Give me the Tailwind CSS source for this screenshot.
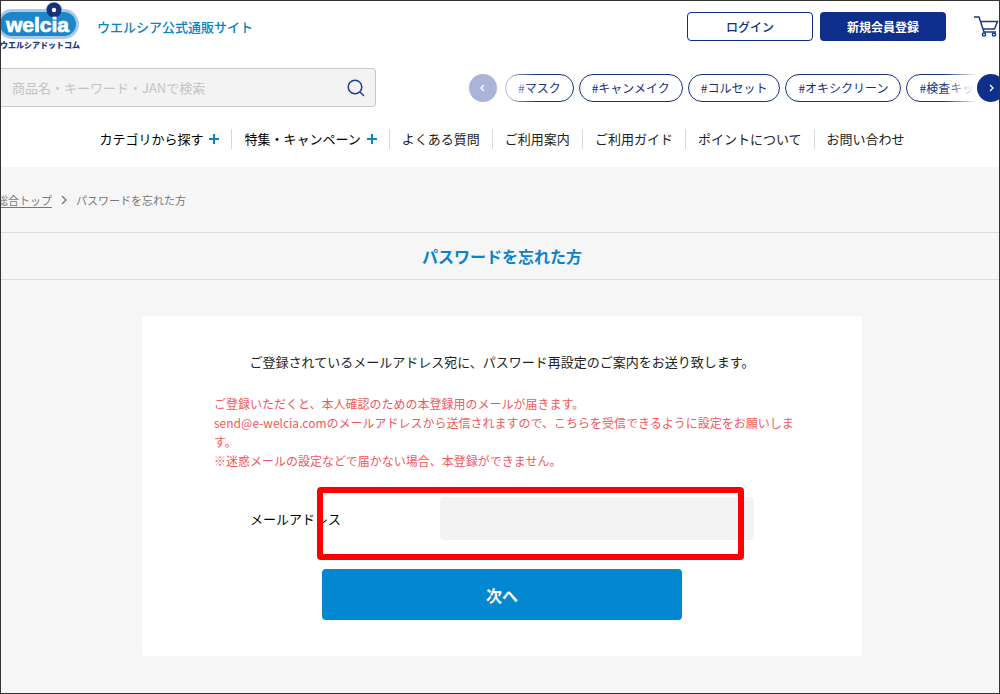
<!DOCTYPE html>
<html lang="ja">
  <head>
    <meta charset="UTF-8" />
    <meta name="viewport" content="width=device-width, initial-scale=1.0" />
    <title>パスワードを忘れた方 | ウエルシアドットコム</title>
    <script src="https://cdn.jsdelivr.net/npm/@tailwindcss/browser@4"></script>
  </head>

<body class="min-h-screen flex flex-col overflow-x-hidden border border-[#333] bg-[#f6f6f6] font-['Noto_Sans_CJK_JP',sans-serif] text-[13px] leading-5 text-[#222]">

  <header class="bg-white pb-[18px]">
    <!-- logo and account -->
    <div class="flex items-center h-[51px]">
      <a href="#" class="shrink-0" aria-label="welcia">
        <svg class="w-20 h-[51px]" viewBox="0 0 80 51">
          <rect x="-4" y="8" width="82" height="30" rx="15" fill="#a9c9e8" />
          <circle cx="53" cy="10" r="9" fill="#a9c9e8" />
          <rect x="-1" y="11" width="76" height="24" rx="12" fill="#1c86c8" />
          <circle cx="53" cy="9" r="7.5" fill="#15317e" />
          <circle cx="53" cy="9" r="2.2" fill="#fff" />
          <text x="5" y="31" font-family="Liberation Sans, sans-serif" font-size="21" font-weight="700" fill="#fff" stroke="#fff" stroke-width="0.7">welcia</text>
          <text x="-1" y="47" font-family="Noto Sans CJK JP, sans-serif" font-size="8" font-weight="900" fill="#1c3a88">ウエルシアドットコム</text>
        </svg>
      </a>
      <p class="ml-4 text-[#0a82c6] font-medium">ウエルシア公式通販サイト</p>
      <div class="ml-auto flex items-center gap-[7px] text-xs">
        <button class="w-[126px] h-[29px] rounded-sm border border-[#0f2f8c] bg-white font-medium text-[#0f2f8c]">ログイン</button>
        <button class="w-[126px] h-[29px] rounded-sm bg-[#0f2f8c] font-bold text-white">新規会員登録</button>
      </div>
      <a href="#" class="ml-7 w-[25px] shrink-0" aria-label="カート">
        <svg class="w-[25px] h-6" viewBox="0 0 25 24" fill="none" stroke="#1c3a8c" stroke-width="1.5">
          <path d="M0 2h5l5 15h12M6.500 6.500h17l-3 7.500H9" />
          <circle cx="10" cy="19.500" r="1.600" />
          <circle cx="20" cy="19.500" r="1.600" />
        </svg>
      </a>
    </div>

    <!-- search and keywords -->
    <div class="mt-4 flex items-center">
      <form class="flex items-center w-[375px] h-[39px] shrink-0 rounded-r-sm border border-l-0 border-[#c8c8c8] bg-[#f3f3f3]">
        <input type="text" aria-label="商品検索" placeholder="商品名・キーワード・JANで検索" class="flex-1 h-full pl-[11px] outline-none placeholder:text-[#c4c4c4]" />
        <button class="mr-[9px]" aria-label="検索">
          <svg class="w-5 h-5" viewBox="0 0 20 20" fill="none" stroke="#1f3a93" stroke-width="1.5">
            <circle cx="9" cy="9" r="6.8" />
            <path d="M14 14l4 4" />
          </svg>
        </button>
      </form>
      <div class="relative flex-1 min-w-0 ml-[93px] flex items-center">
        <button class="shrink-0 flex items-center justify-center w-7 h-7 rounded-full bg-[#a9b4d8]" aria-label="前へ">
          <svg class="w-3 h-3" viewBox="0 0 12 12" fill="none" stroke="#fff" stroke-width="1.3"><path d="M7 3L4 6l3 3" /></svg>
        </button>
        <div class="relative ml-2 flex-1 min-w-0 overflow-hidden">
          <div class="flex gap-[5px] text-xs text-[#16307f] whitespace-nowrap">
            <a href="#" class="px-3 leading-[26px] rounded-full border border-[#16307f]">#マスク</a>
            <a href="#" class="px-3 leading-[26px] rounded-full border border-[#16307f]">#キャンメイク</a>
            <a href="#" class="px-3 leading-[26px] rounded-full border border-[#16307f]">#コルセット</a>
            <a href="#" class="px-3 leading-[26px] rounded-full border border-[#16307f]">#オキシクリーン</a>
            <a href="#" class="px-3 leading-[26px] rounded-full border border-[#16307f]">#検査キット</a>
          </div>
          <div class="absolute inset-y-0 left-0 w-8 bg-linear-to-r from-white/70 to-white/0"></div>
          <div class="absolute inset-y-0 right-0 w-14 bg-linear-to-r from-white/0 to-white to-60%"></div>
        </div>
        <button class="absolute -right-1.5 flex items-center justify-center w-7 h-7 rounded-full bg-[#0f2f8c]" aria-label="次へ">
          <svg class="w-3 h-3" viewBox="0 0 12 12" fill="none" stroke="#fff" stroke-width="1.3"><path d="M5 3l3 3-3 3" /></svg>
        </button>
      </div>
    </div>

    <nav class="mt-[22px] pl-1">
      <ul class="flex justify-center divide-x divide-[#d8d8d8] whitespace-nowrap">
        <li class="px-3">
          <a href="#" class="flex items-center gap-[6px] text-black">カテゴリから探す
            <svg class="w-[10px] h-[10px]" viewBox="0 0 10 10" stroke="#0a82c6" stroke-width="2"><path d="M5 0v10M0 5h10" /></svg>
          </a>
        </li>
        <li class="px-3">
          <a href="#" class="flex items-center gap-[6px] text-black">特集・キャンペーン
            <svg class="w-[10px] h-[10px]" viewBox="0 0 10 10" stroke="#0a82c6" stroke-width="2"><path d="M5 0v10M0 5h10" /></svg>
          </a>
        </li>
        <li class="px-3"><a href="#">よくある質問</a></li>
        <li class="px-3"><a href="#">ご利用案内</a></li>
        <li class="px-3"><a href="#">ご利用ガイド</a></li>
        <li class="px-3"><a href="#">ポイントについて</a></li>
        <li class="px-3"><a href="#">お問い合わせ</a></li>
      </ul>
    </nav>
  </header>

  <main class="pb-9">
    <div class="flex items-center h-[65px] text-[11px] text-[#777]">
      <a href="#" class="-ml-1 underline underline-offset-2">総合トップ</a>
      <svg class="mx-[6px] w-3 h-3" viewBox="0 0 12 12" fill="none" stroke="#777" stroke-width="1.3"><path d="M4 2l4 4-4 4" /></svg>
      <span>パスワードを忘れた方</span>
    </div>

    <h1 class="pl-1 h-12 border-y border-[#dcdcdc] text-center text-base leading-[46px] font-bold text-[#0a82cc]">パスワードを忘れた方</h1>

    <div class="pl-1">
      <section class="mx-auto mt-9 w-full max-w-[720px] rounded-sm bg-white py-9">
        <p class="text-center">ご登録されているメールアドレス宛に、パスワード再設定のご案内をお送り致します。</p>
        <p class="mt-[22px] pl-[72px] pr-16 text-xs leading-[19px] text-[#f0595c]">
          ご登録いただくと、本人確認のための本登録用のメールが届きます。<br>
          send@e-welcia.comのメールアドレスから送信されますので、こちらを受信できるように設定をお願いします。<br>
          ※迷惑メールの設定などで届かない場合、本登録ができません。
        </p>
        <form onsubmit="return false;">
          <div class="relative mt-[27px] px-[108px] flex items-center">
            <label for="mail" class="flex-1 text-black">メールアドレス</label>
            <input type="email" id="mail" name="mail" class="w-[314px] h-[43px] px-3 rounded-sm bg-[#f3f3f3]" />
            <!-- highlight frame -->
            <div class="absolute left-[175px] right-[118px] -top-[10px] -bottom-5 rounded border-[6px] border-[#ff0000] pointer-events-none"></div>
          </div>
          <button class="block mx-auto mt-[29px] w-[360px] h-[51px] rounded-sm bg-[#0387d0] text-base font-bold text-white">次へ</button>
        </form>
      </section>
    </div>
  </main>

</body>
</html>
